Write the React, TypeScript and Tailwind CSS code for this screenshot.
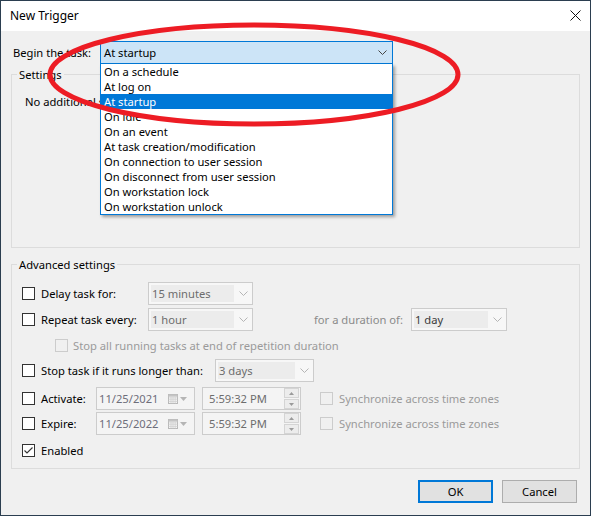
import React from "react";

const font = "font-['Segoe_UI','Noto_Sans',sans-serif]";

function Check({ checked = false, disabled = false }: { checked?: boolean; disabled?: boolean }) {
  return (
    <span
      className={`flex h-[13px] w-[13px] shrink-0 items-center justify-center border ${
        disabled ? "border-[#cccccc] bg-[#f0f0f0]" : "border-[#333333] bg-white"
      }`}
    >
      {checked && (
        <svg width="11" height="11" viewBox="0 0 11 11">
          <path d="M1.5 5.5 L4 8 L9.5 2.5" fill="none" stroke="#333333" strokeWidth="1.1" />
        </svg>
      )}
    </span>
  );
}

function Chevron({ color }: { color: string }) {
  return (
    <svg width="9" height="5" viewBox="0 0 9 5">
      <path d="M0.5 0.5 L4.5 4.5 L8.5 0.5" fill="none" stroke={color} strokeWidth="1" />
    </svg>
  );
}

function DisabledCombo({ text, w, dark = false }: { text: string; w: string; dark?: boolean }) {
  return (
    <div className={`flex h-[23px] shrink-0 items-center border border-[#cccccc] bg-[#f7f7f7] pl-[2px] ${w}`}>
      <div
        className={`flex h-[17px] flex-1 items-center bg-[#ececec] pl-[1px] ${
          dark ? "text-[#3a3a3a]" : "text-[#6d6d6d]"
        }`}
      >
        {text}
      </div>
      <div className="flex w-[18px] items-center justify-center">
        <Chevron color="#b5b5b5" />
      </div>
    </div>
  );
}

function DatePick({ text }: { text: string }) {
  return (
    <div className="flex h-[23px] w-[99px] shrink-0 items-center border border-[#cccccc] bg-[#f4f4f4] pl-[2px]">
      <span className="flex-1 text-[#6e6e7a]">{text}</span>
      <svg width="10" height="10" viewBox="0 0 10 10" className="mr-[2px]">
        <rect x="0.5" y="0.5" width="9" height="9" fill="#f4f4f4" stroke="#b8b8b8" />
        <path d="M0.5 3 H9.5 M0.5 5.2 H9.5 M0.5 7.4 H9.5 M3 3 V9.5 M5 3 V9.5 M7.2 3 V9.5" stroke="#cfcfcf" strokeWidth="0.8" />
        <rect x="0.5" y="0.5" width="9" height="2" fill="#c4c4c4" />
      </svg>
      <svg width="7" height="4" viewBox="0 0 7 4" className="mr-[7px]">
        <path d="M0 0 H7 L3.5 4 Z" fill="#b5b5b5" />
      </svg>
    </div>
  );
}

function TimePick() {
  return (
    <div className="flex h-[23px] w-[99px] shrink-0 items-center border border-[#cccccc] bg-[#f4f4f4] pl-[6px] pr-[1px]">
      <span className="flex-1 text-[#6d6d6d]">5:59:32 PM</span>
      <div className="flex h-[21px] w-[15px] flex-col gap-[1px]">
        <div className="flex flex-1 items-center justify-center border border-[#d4d4d4] bg-[#ececec]">
          <svg width="5" height="3" viewBox="0 0 5 3">
            <path d="M0 3 H5 L2.5 0 Z" fill="#9a9a9a" />
          </svg>
        </div>
        <div className="flex flex-1 items-center justify-center border border-[#d4d4d4] bg-[#ececec]">
          <svg width="5" height="3" viewBox="0 0 5 3">
            <path d="M0 0 H5 L2.5 3 Z" fill="#9a9a9a" />
          </svg>
        </div>
      </div>
    </div>
  );
}

const items = [
  "On a schedule",
  "At log on",
  "At startup",
  "On idle",
  "On an event",
  "At task creation/modification",
  "On connection to user session",
  "On disconnect from user session",
  "On workstation lock",
  "On workstation unlock",
];

export default function App() {
  return (
    <div
      className={`relative h-[516px] w-[591px] overflow-hidden border border-[#2b3e50] bg-[#f0f0f0] text-[11.2px] leading-[15px] text-black ${font}`}
    >
      {/* Title bar */}
      <div className="flex h-[30px] items-center justify-between bg-white pb-[1px] pl-[9px] pr-[9px]">
        <span className="text-[12px]">New Trigger</span>
        <svg width="11" height="11" viewBox="0 0 11 11">
          <path d="M0.5 0.5 L10.5 10.5 M10.5 0.5 L0.5 10.5" stroke="#111111" strokeWidth="1" />
        </svg>
      </div>

      <div className="flex flex-col">
        {/* Begin the task */}
        <div className="mt-[10px] flex h-[23px] items-center pl-[12px]">
          <span className="w-[87px]">Begin the task:</span>
          <div className="flex h-[23px] w-[293px] items-center border border-[#0078d7] bg-[#cce4f7] pl-[3px] pr-[5px]">
            <span className="flex-1">At startup</span>
            <Chevron color="#444444" />
          </div>
        </div>

        {/* Settings group */}
        <div className="mx-[10px] mt-[10px] h-[174px] border border-[#dcdcdc]">
          <div className="-mt-[8px] ml-[5px] w-fit bg-[#f0f0f0] px-[2px]">Settings</div>
          <div className="ml-[13px] mt-[12px] w-[75px] overflow-hidden whitespace-nowrap">No additional settings</div>
        </div>

        {/* Advanced settings group */}
        <div className="mx-[10px] mt-[16px] h-[205px] border border-[#dcdcdc]">
          <div className="-mt-[8px] ml-[5px] w-fit bg-[#f0f0f0] px-[2px]">Advanced settings</div>

          <div className="mt-[10px] flex h-[23px] items-center pl-[10px]">
            <Check />
            <span className="ml-[6px] w-[107px]">Delay task for:</span>
            <DisabledCombo text="15 minutes" w="w-[105px]" />
          </div>

          <div className="mt-[3px] flex h-[23px] items-center pl-[10px]">
            <Check />
            <span className="ml-[6px] w-[107px]">Repeat task every:</span>
            <DisabledCombo text="1 hour" w="w-[105px]" />
            <span className="ml-[61px] w-[97px] text-[#8a8a8a]">for a duration of:</span>
            <DisabledCombo text="1 day" w="w-[96px]" dark />
          </div>

          <div className="mt-[6px] flex h-[16px] items-center pl-[43px]">
            <Check disabled />
            <span className="ml-[5px] text-[#9a9a9a]">Stop all running tasks at end of repetition duration</span>
          </div>

          <div className="mt-[6px] flex h-[23px] items-center pl-[10px]">
            <Check />
            <span className="ml-[6px] w-[174px]">Stop task if it runs longer than:</span>
            <DisabledCombo text="3 days" w="w-[99px]" />
          </div>

          <div className="mt-[5px] flex h-[23px] items-center pl-[10px]">
            <Check />
            <span className="ml-[6px] w-[55px]">Activate:</span>
            <DatePick text="11/25/2021" />
            <div className="ml-[7px]">
              <TimePick />
            </div>
            <div className="ml-[19px]">
              <Check disabled />
            </div>
            <span className="ml-[6px] text-[#9a9a9a]">Synchronize across time zones</span>
          </div>

          <div className="mt-[2px] flex h-[23px] items-center pl-[10px]">
            <Check />
            <span className="ml-[6px] w-[55px]">Expire:</span>
            <DatePick text="11/25/2022" />
            <div className="ml-[7px]">
              <TimePick />
            </div>
            <div className="ml-[19px]">
              <Check disabled />
            </div>
            <span className="ml-[6px] text-[#9a9a9a]">Synchronize across time zones</span>
          </div>

          <div className="mt-[7px] flex h-[16px] items-center pl-[10px]">
            <Check checked />
            <span className="ml-[6px]">Enabled</span>
          </div>
        </div>

        {/* Buttons */}
        <div className="mt-[11px] flex justify-end gap-[9px] pr-[13px]">
          <button className="flex h-[23px] w-[75px] items-center justify-center border-2 border-[#0078d7] bg-[#e1e1e1]">
            OK
          </button>
          <button className="flex h-[23px] w-[75px] items-center justify-center border border-[#adadad] bg-[#e1e1e1]">
            Cancel
          </button>
        </div>
      </div>

      {/* Dropdown list */}
      <div className="absolute left-[99px] top-[63px] w-[293px] border-x border-b border-[#0078d7] bg-white shadow-[2px_2px_3px_rgba(0,0,0,0.35)]">
        {items.map((it) => (
          <div
            key={it}
            className={`h-[15px] pl-[3px] leading-[15px] ${it === "At startup" ? "bg-[#0078d7] text-white" : "text-black"}`}
          >
            {it}
          </div>
        ))}
      </div>

      {/* Red ellipse annotation */}
      <svg className="pointer-events-none absolute -left-px -top-px" width="591" height="516" viewBox="0 0 591 516">
        <ellipse cx="254" cy="74.5" rx="204" ry="49.5" fill="none" stroke="#ed1c24" strokeWidth="5" />
      </svg>
    </div>
  );
}
